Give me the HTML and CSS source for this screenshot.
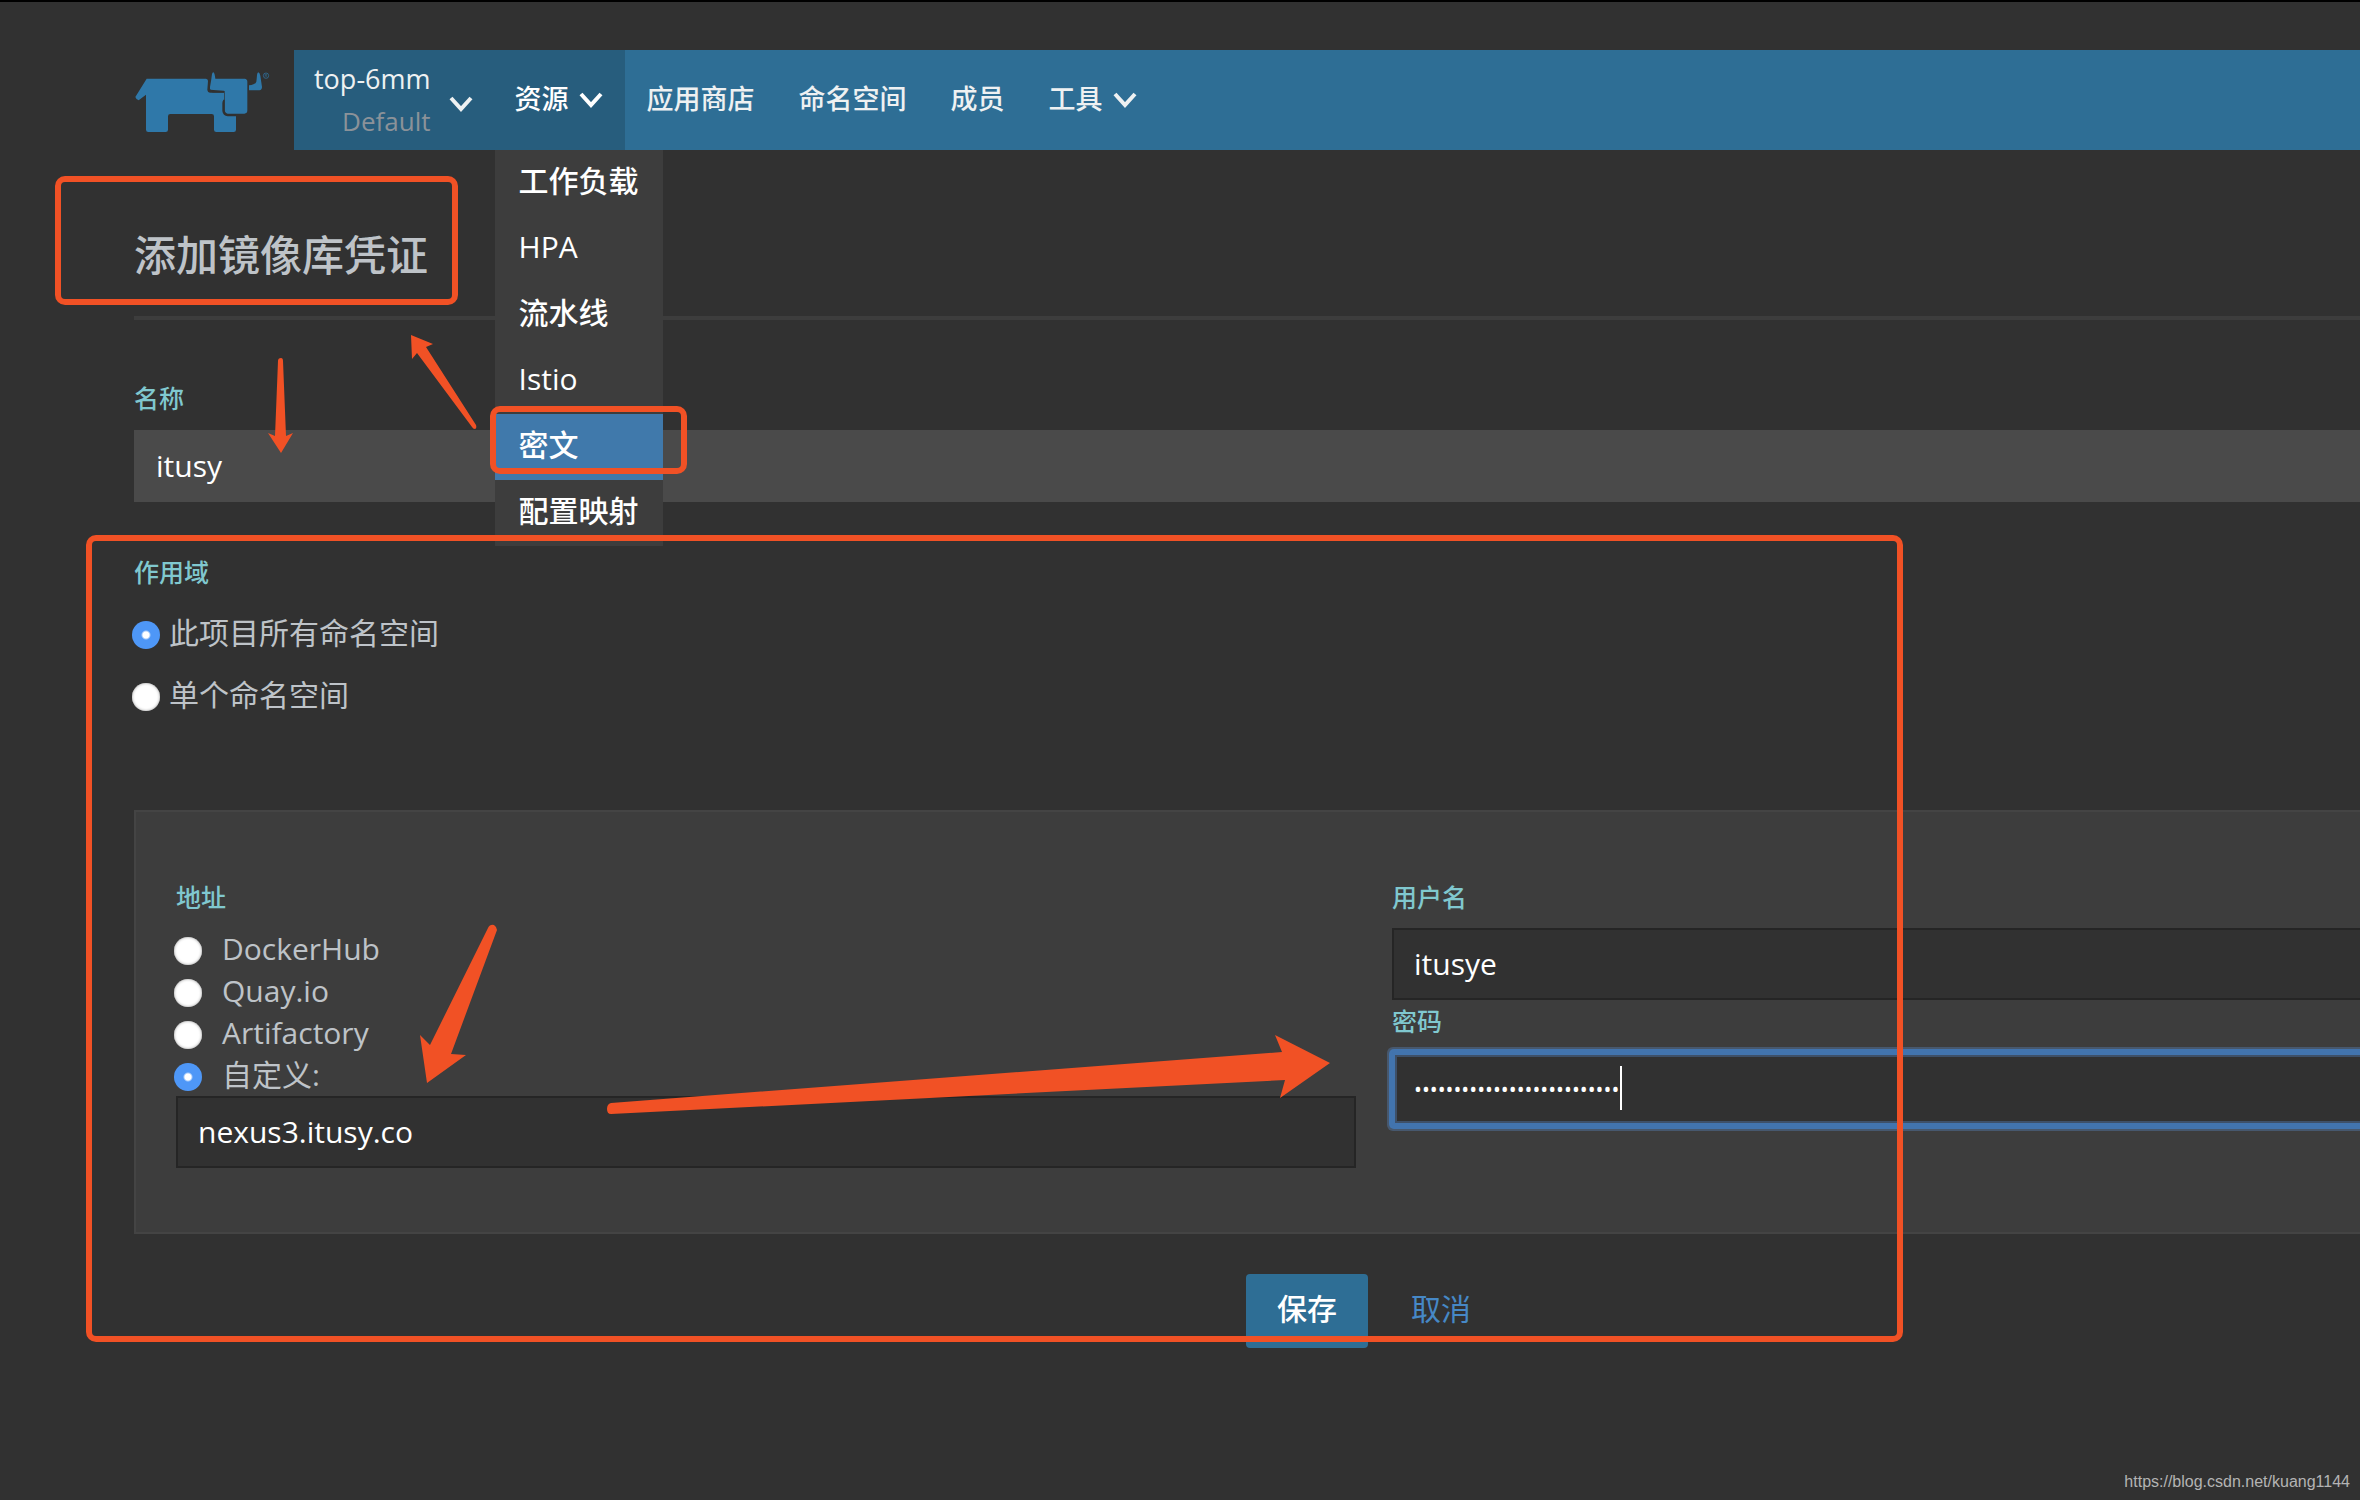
FILE: index.html
```
<!DOCTYPE html>
<html lang="zh-CN">
<head>
<meta charset="utf-8">
<title>添加镜像库凭证</title>
<link rel="stylesheet" href="styles.css">
</head>
<body>
<div class="page">
  <header class="header">
    <a class="logo" href="#" aria-label="Rancher">
      <svg viewBox="45 65 405 183" width="135" height="61" aria-hidden="true">
        <path fill="#2f78a9" d="M80 85H258Q264 86 264 92L262 118Q263 127 271 127H312V148Q307 150 307 158V182Q309 197 323 198H348V238Q348 245 341 245H289Q282 245 282 238V198Q282 191 275 191H151Q144 191 144 198V238Q144 245 137 245H85Q78 245 78 238V133L56 150Q49 149 46 140Z"/>
        <path fill="#2f78a9" d="M280 66Q284 67 286 85H374Q382 86 382 94V180Q382 190 373 190H323Q315 189 314 180V122L272 118Q269 117 270 110Q274 88 276 72Q277 66 280 66Z"/>
        <path fill="none" stroke="#313131" stroke-width="5" d="M312 124H277"/>
        <path fill="none" stroke="#313131" stroke-width="4" d="M312 148V182Q314 193 325 194H348"/>
        <path fill="#2f78a9" d="M415 66Q419 67 421 76L426 110Q426 119 418 120H387V105Q405 104 409 94Q410 88 411 74Q412 66 415 66Z"/>
        <circle cx="438" cy="76" r="8" fill="none" stroke="#2f78a9" stroke-width="2"/>
        <text x="438" y="81" text-anchor="middle" class="logo-mark">R</text>
      </svg>
    </a>
    <nav class="nav">
      <button class="project" type="button">
        <span class="project-names"><span>top-6mm</span><span class="project-sub">Default</span></span>
        <svg class="chevron" viewBox="0 0 24 16" aria-hidden="true"><path d="M2 2L12 13L22 2"/></svg>
      </button>
      <div class="nav-group">
        <button class="nav-item active" type="button">资源
          <svg class="chevron" viewBox="0 0 24 16" aria-hidden="true"><path d="M2 2L12 13L22 2"/></svg>
        </button>
        <div class="menu">
          <a href="#">工作负载</a>
          <a href="#">HPA</a>
          <a href="#">流水线</a>
          <a href="#">Istio</a>
          <a href="#" class="selected">密文</a>
          <a href="#">配置映射</a>
        </div>
      </div>
      <a class="nav-item" href="#">应用商店</a>
      <a class="nav-item" href="#">命名空间</a>
      <a class="nav-item" href="#">成员</a>
      <button class="nav-item" type="button">工具
        <svg class="chevron" viewBox="0 0 24 16" aria-hidden="true"><path d="M2 2L12 13L22 2"/></svg>
      </button>
    </nav>
  </header>

  <main class="content">
    <h1>添加镜像库凭证</h1>
    <form>
      <label class="label" for="name">名称</label>
      <input class="field filled" id="name" type="text" value="itusy">

      <fieldset class="scope">
        <legend class="label">作用域</legend>
        <label class="radio"><input type="radio" name="scope" checked>此项目所有命名空间</label>
        <label class="radio"><input type="radio" name="scope">单个命名空间</label>
      </fieldset>

      <section class="panel">
        <fieldset class="column">
          <legend class="label">地址</legend>
          <label class="radio"><input type="radio" name="registry">DockerHub</label>
          <label class="radio"><input type="radio" name="registry">Quay.io</label>
          <label class="radio"><input type="radio" name="registry">Artifactory</label>
          <label class="radio"><input type="radio" name="registry" checked>自定义:</label>
          <input class="field" type="text" aria-label="自定义" value="nexus3.itusy.co">
        </fieldset>
        <div class="column">
          <label class="label" for="user">用户名</label>
          <input class="field" id="user" type="text" value="itusye">
          <label class="label tight" for="password">密码</label>
          <div class="password">
            <input class="field focused" id="password" type="password" value="abcdefghijklmnopqrstuvwxyz">
            <span class="caret"></span>
          </div>
        </div>
      </section>

      <div class="actions">
        <button class="button primary" type="button">保存</button>
        <button class="button link" type="button">取消</button>
      </div>
    </form>
  </main>

  <div class="mark mark-title"></div>
  <div class="mark mark-menu"></div>
  <div class="mark mark-form"></div>
  <svg class="arrows" viewBox="0 0 1400 1200" width="1400" height="1200" aria-hidden="true">
    <path d="M278 361Q278 358 281 358Q283 358 283 361L286 436L293 433L281 453L268 433L275 436Z"/>
    <path d="M411 335L433 344L426 347L476 425Q477 428 475 429Q473 429 472 427L417 353L412 359Z"/>
    <path d="M488 928Q490 924 494 925Q497 927 497 930L451 1054L466 1055L427 1083L420 1035L430 1045Z"/>
    <path d="M611 1103L1282 1052L1275 1035L1330 1063L1280 1098L1285 1080L611 1114Q607 1114 607 1109Q607 1104 611 1103Z"/>
  </svg>
  <footer class="watermark">https://blog.csdn.net/kuang1144</footer>
</div>
</body>
</html>
```
FILE: styles.css
```
* { box-sizing: border-box; }

body {
  margin: 0;
  background: #313131;
  color: #bec3c8;
  font: 30px/42px "Open Sans", "Noto Sans CJK SC", sans-serif;
}

button, input { font: inherit; color: inherit; }
a { color: inherit; text-decoration: none; }
fieldset { margin: 0; padding: 0; border: 0; min-width: 0; }
legend { padding: 0; }

.page {
  position: relative;
  display: flex;
  flex-direction: column;
  min-height: 100vh;
  overflow: hidden;
  border-top: 2px solid #000;
}

.header {
  display: flex;
  align-items: center;
  gap: 24px;
  margin-top: 48px;
  padding-left: 135px;
}
.logo { display: flex; padding-top: 4px; }
.logo-mark { font: 12px "Open Sans", sans-serif; fill: #2f78a9; }

.nav {
  display: flex;
  flex: 1;
  height: 100px;
  background: #2e6e95;
  color: #eef1f2;
  font-size: 27px;
  font-weight: 500;
}
.nav-item, .project {
  display: flex;
  align-items: center;
  height: 100%;
  border: 0;
  background: none;
}
.nav-item { gap: 10px; padding: 0 22px 2px; }
.nav-item.active, .project { background: #275d7d; }
.nav-item.active { color: #fff; }
.project { gap: 18px; padding: 0 20px; }
.project-names { display: flex; flex-direction: column; text-align: right; }
.project-sub { color: #8b9299; font-size: 26px; font-weight: 400; }
.chevron { width: 24px; height: 16px; margin-top: 2px; fill: none; stroke: currentColor; stroke-width: 4; }
.project .chevron { margin-top: 8px; }

.nav-group { position: relative; }
.menu {
  position: absolute;
  top: 100%;
  left: 2px;
  z-index: 2;
  background: #3d3d3d;
  color: #fff;
  font-size: 30px;
  white-space: nowrap;
}
.menu a { display: block; padding: 10px 24px 14px; }
.menu .selected { background: #4079ab; }

/* The form is wider than the window and runs off its right edge. */
.content { margin: 0 -254px 0 134px; }

h1 {
  margin: 0;
  padding: 72px 0 28px;
  border-bottom: 4px solid #3d3d3d;
  font-size: 42px;
  font-weight: 500;
  line-height: 66px;
}

.label { display: block; color: #80c8cf; font-size: 25px; font-weight: 500; line-height: 36px; }
form > .label { margin: 60px 0 14px; }

.field {
  display: block;
  width: 100%;
  height: 72px;
  padding: 0 20px 2px;
  border: 2px solid #252525;
  border-radius: 0;
  outline: 0;
  background: #313131;
  color: #fff;
}
.field.filled { border-color: #4a4a4a; background: #4a4a4a; }

.radio { display: flex; align-items: center; }
.radio input {
  appearance: none;
  flex: none;
  width: 28px;
  height: 28px;
  margin: 4px 0 0 -2px;
  border-radius: 50%;
  background: #fff;
  box-shadow: inset 0 0 3px #999;
}
.radio input:checked {
  background: radial-gradient(circle, #fff 3px, #4e97f7 5px);
  box-shadow: none;
}

.scope { margin-top: 52px; }
.scope .radio { gap: 9px; margin-top: 20px; }
.scope legend + .radio { margin-top: 22px; }

.panel {
  display: grid;
  grid-template-columns: 1fr 1fr;
  gap: 36px;
  margin-top: 94px;
  padding: 67px 40px 64px;
  border: 2px solid #444;
  background: #3d3d3d;
}
.column .radio { gap: 20px; }
.column .label { margin-bottom: 13px; }
.column .label.tight { margin-top: 3px; }

.password { position: relative; }
.field.focused {
  height: 74px;
  padding-bottom: 0;
  border-color: #4274ae;
  border-radius: 2px;
  font-size: 21px;
  box-shadow: inset 0 0 0 1px #4274ae, inset 0 0 0 3px #3e5068, 0 0 0 3px #4274ae, 0 0 0 5px #47586e;
}
.caret {
  position: absolute;
  top: 14px;
  left: 228px;
  width: 2px;
  height: 44px;
  background: #fff;
}

.actions {
  display: flex;
  justify-content: center;
  gap: 12px;
  margin-top: 40px;
}
.button {
  padding: 14px 31px 18px;
  border: 0;
  border-radius: 4px;
  background: none;
}
.button.primary { background: #2e6e95; color: #fff; font-weight: 500; }
.button.link { color: #4688c6; }

/* Annotations drawn over the form */
.mark {
  position: absolute;
  z-index: 3;
  border: 6px solid #f15125;
  border-radius: 10px;
}
.mark-title { left: 55px; top: 174px; width: 403px; height: 129px; }
.mark-menu { left: 490px; top: 404px; width: 197px; height: 68px; }
.mark-form { left: 86px; top: 533px; width: 1817px; height: 807px; }
.arrows { position: absolute; top: -2px; left: 0; z-index: 3; fill: #f15125; pointer-events: none; }

.watermark {
  margin-top: auto;
  padding: 0 10px 8px;
  color: #b4b4b4;
  font: 16px/20px "Liberation Sans", sans-serif;
  text-align: right;
}
```
